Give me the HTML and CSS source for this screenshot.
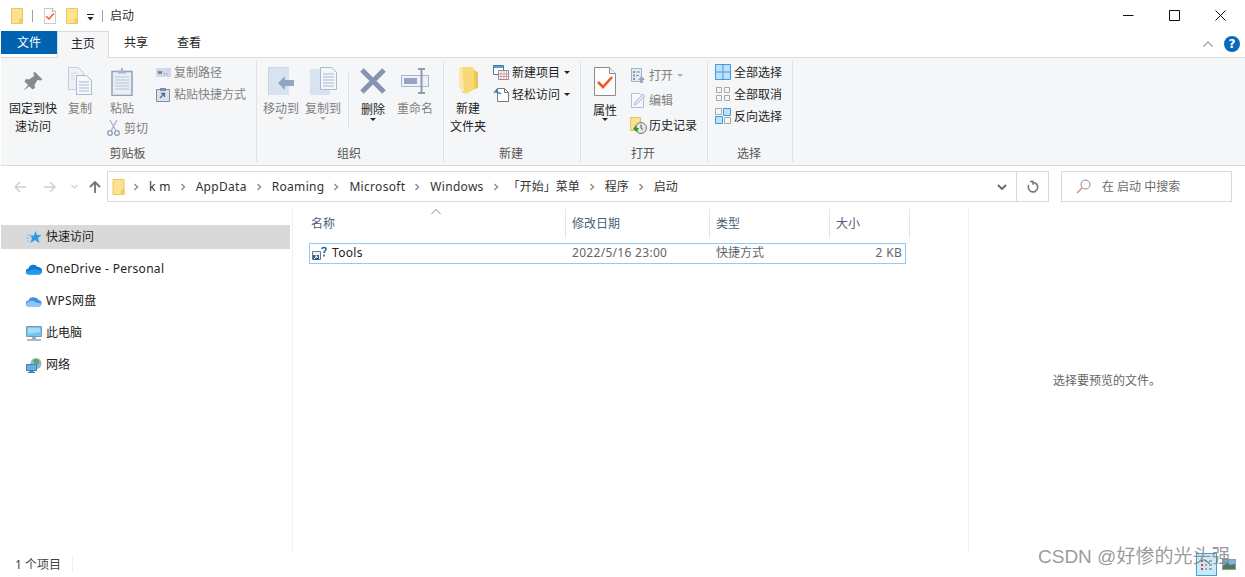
FILE: index.html
```html
<!DOCTYPE html>
<html>
<head>
    <title>启动</title>
    <link rel="stylesheet" href="styles.css">
</head>
<body>
    <svg class="sprite">
        <symbol id="folder" viewBox="0 0 12 16">
            <path d="M.5.5h11v15H.5z" fill="#fde28e" stroke="#ecc660"/>
            <path d="M9 15.5V11h2.5v4.5z" fill="#f6cf68" stroke="#ecc660"/>
        </symbol>
        <symbol id="chev" viewBox="0 0 6 8">
            <path d="M1.5 1l3 3-3 3" fill="none" stroke="#8a8a8a" stroke-width="1.4"/>
        </symbol>
        <symbol id="checkdoc" viewBox="0 0 22 29">
            <path d="M.5.5h15l6 6v22H.5z" fill="#fdfdfd" stroke="#8c8c8c"/>
            <path d="M15.5.5v6h6" fill="#eee" stroke="#8c8c8c"/>
            <path d="M4 15l5 5 9-10" fill="none" stroke="#ec5a24" stroke-width="2.6"/>
        </symbol>
    </svg>

    <div class="window">
        <header class="titlebar">
            <svg class="qa-folder"><use href="#folder"/></svg>
            <span class="qa-sep"></span>
            <svg class="qa-doc" viewBox="0 0 22 29"><use href="#checkdoc"/></svg>
            <svg class="qa-folder2"><use href="#folder"/></svg>
            <svg class="qa-drop" viewBox="0 0 7 7"><path d="M0 .5h7" stroke="#222"/><path d="M.5 3h6l-3 3.5z" fill="#222"/></svg>
            <span class="qa-sep qa-sep2"></span>
            <span class="title-text">启动</span>
            <div class="winbtns">
                <svg width="11" height="11" viewBox="0 0 11 11"><path d="M0 5.500h10.500" stroke="#111"/></svg>
                <svg width="11" height="11" viewBox="0 0 11 11"><path d="M.5.5h10v10H.5z" fill="none" stroke="#111"/></svg>
                <svg width="11" height="11" viewBox="0 0 11 11"><path d="M.5.5l10 10M10.500.5l-10 10" stroke="#111"/></svg>
            </div>
        </header>

        <nav class="tabs">
            <div class="tab tab-file">文件</div>
            <div class="tab tab-home">主页</div>
            <div class="tab tab-share">共享</div>
            <div class="tab tab-view">查看</div>
            <svg class="ribbon-up" viewBox="0 0 10 6"><path d="M.5 5.500L5 1l4.500 4.500" fill="none" stroke="#9a9a9a" stroke-width="1.200"/></svg>
            <div class="help">?</div>
        </nav>

        <section class="ribbon">
            <div class="group group-clip">
                <div class="group-body">
                    <div class="big w48">
                        <div class="big-ico">
                            <svg width="22" height="22" viewBox="0 0 22 22"><path d="M12.500 1.500l8 8-2 1-3-.5-3 5 .5 3-2.500 1.500-8-8L4 9l3 .5 5-3.500-.5-3z" fill="#858a90"/><path d="M7 14l-6 7 7.500-5.500z" fill="#858a90"/></svg>
                        </div>
                        <span>固定到快<br>速访问</span>
                    </div>
                    <div class="big w36 off">
                        <div class="big-ico">
                            <svg width="24" height="28" viewBox="0 0 24 28"><path d="M.5.5h10l5 5v17H.5z" fill="#eef2f8" stroke="#c0cde0"/><path d="M8.500 8.500h10l5 5v14h-15z" fill="#f6f8fb" stroke="#a9b9d2"/><path d="M11 15h10M11 18h10M11 21h10M11 24h10" stroke="#a9b9d2"/><path d="M3 6h6M3 9h4M3 12h4" stroke="#cfd9e8"/></svg>
                        </div>
                        <span>复制</span>
                    </div>
                    <div class="paste-col">
                        <div class="big w32 off">
                            <div class="big-ico">
                                <svg width="22" height="29" viewBox="0 0 22 29"><path d="M1 4.500h20v24H1z" fill="#e9eef5" stroke="#8fa1bb" stroke-width="1.500"/><path d="M7 3.500h3V1h2v2.500h3v3H7z" fill="#aab8cc"/><path d="M4 10h14M4 13h14M4 16h14M4 19h14M4 22h14" stroke="#b9c6d8"/></svg>
                            </div>
                            <span>粘贴</span>
                        </div>
                        <div class="small h22 off cut">
                            <svg width="13" height="16" viewBox="0 0 13 16"><circle cx="3" cy="13" r="2.300" fill="none" stroke="#8b9cb6" stroke-width="1.300"/><circle cx="10" cy="13" r="2.300" fill="none" stroke="#8b9cb6" stroke-width="1.300"/><path d="M4 11L10 0M9 11L3 0" stroke="#a3b0c4" stroke-width="1.200"/></svg>
                            <span>剪切</span>
                        </div>
                    </div>
                    <div class="small-col">
                        <div class="small h22 off">
                            <span class="small-ico"><svg width="15" height="9" viewBox="0 0 15 9"><path d="M0 0h15v9H0z" fill="#cfd9e8"/><path d="M2 3l1 3 1-3 1 3 1-3M8 6h1M10.500 6h1" fill="none" stroke="#667" stroke-width=".8"/></svg></span>
                            <span>复制路径</span>
                        </div>
                        <div class="small h22 off">
                            <span class="small-ico"><svg width="14" height="15" viewBox="0 0 14 15"><path d="M.5 2.500h13v12H.5z" fill="#dbe2ec" stroke="#7d8ea6"/><path d="M4 1h6v3H4z" fill="#7d8ea6"/><path d="M4 11l4-4M5 6.500h3.500V10" fill="none" stroke="#4a6a96" stroke-width="1.300"/></svg></span>
                            <span>粘贴快捷方式</span>
                        </div>
                    </div>
                </div>
                <div class="group-label">剪贴板</div>
            </div>

            <div class="group group-org">
                <div class="group-body">
                    <div class="big w36 off">
                        <div class="big-ico">
                            <svg width="26" height="28" viewBox="0 0 26 28"><path d="M0 0h21v28H0z" fill="#d8e2f1"/><path d="M0 .5h21M.5 0v28" stroke="#c9d6e8"/><path d="M10 16l7-7v4h9v6h-9v4z" fill="#92a5c2"/></svg>
                        </div>
                        <span>移动到</span>
                        <i class="caret light"></i>
                    </div>
                    <div class="big w36 off">
                        <div class="big-ico">
                            <svg width="27" height="28" viewBox="0 0 27 28"><path d="M0 2h20v26H0z" fill="#d8e2f1"/><path d="M10.500.5h11l5 5v17h-16z" fill="#f4f6fa" stroke="#a9b9d2"/><path d="M13 7h11M13 10h11M13 13h11M13 16h11M13 19h11" stroke="#a9b9d2"/></svg>
                        </div>
                        <span>复制到</span>
                        <i class="caret light"></i>
                    </div>
                    <span class="inner-sep"></span>
                    <div class="big w36 big-del">
                        <div class="big-ico">
                            <svg width="26" height="26" viewBox="0 0 26 26"><path d="M2 2l22 22M24 2L2 24" stroke="#8494b2" stroke-width="5"/></svg>
                        </div>
                        <span>删除</span>
                        <i class="caret"></i>
                    </div>
                    <div class="big w36 off">
                        <div class="big-ico">
                            <svg width="28" height="26" viewBox="0 0 28 26"><path d="M.5 7.500h27v11H.5z" fill="#eef2f8" stroke="#a6b5cc"/><path d="M3 10h13v6H3z" fill="#93a5c2"/><path d="M17 1h3.500M24 1h-3.500v24M17 25h7" fill="none" stroke="#8c9cb6" stroke-width="2"/></svg>
                        </div>
                        <span>重命名</span>
                    </div>
                </div>
                <div class="group-label">组织</div>
            </div>

            <div class="group group-new">
                <div class="group-body">
                    <div class="big w36">
                        <div class="big-ico">
                            <svg width="19" height="28" viewBox="0 0 19 28"><path d="M3 26L16 22l3-1V5l-3-1V1z" fill="#f0c458"/><path d="M0 0h14l2 22-9 5-4-3z" fill="#f7d978"/><path d="M0 0h3l2 24H3L0 20z" fill="#fbe9ac"/></svg>
                        </div>
                        <span>新建<br>文件夹</span>
                    </div>
                    <div class="small-col">
                        <div class="small h22">
                            <span class="small-ico"><svg width="16" height="15" viewBox="0 0 16 15"><path d="M.5.500h10v9H.5z" fill="#fff" stroke="#4c7a99"/><path d="M1 1h9v2H1z" fill="#58a0c8"/><path d="M5.500 5.500h10v9h-10z" fill="#fff" stroke="#8a8fa8"/><path d="M8 5.500v9M11 5.500v9M13.500 5.500v9M5.500 9h10M5.500 11.500h10" stroke="#c66" stroke-width=".6"/></svg></span>
                            <span>新建项目</span><i class="caret side"></i>
                        </div>
                        <div class="small h22">
                            <span class="small-ico"><svg width="15" height="15" viewBox="0 0 15 15"><path d="M3.500 1.500h7l4 4v9h-11z" fill="#fff" stroke="#777"/><path d="M10.500 1.500v4h4" fill="none" stroke="#777"/><path d="M0 6l2.500-3 .5 2.500c2 0 3 .5 4 1.500" fill="none" stroke="#2d7fc1" stroke-width="1.300"/></svg></span>
                            <span>轻松访问</span><i class="caret side"></i>
                        </div>
                    </div>
                </div>
                <div class="group-label">新建</div>
            </div>

            <div class="group group-open">
                <div class="group-body">
                    <div class="big w24 big-prop">
                        <div class="big-ico">
                            <svg width="22" height="29"><use href="#checkdoc"/></svg>
                        </div>
                        <span>属性</span>
                        <i class="caret"></i>
                    </div>
                    <div class="small-col rows25">
                        <div class="small h25 off">
                            <span class="small-ico"><svg width="14" height="15" viewBox="0 0 14 15"><path d="M.5.500h10v13H.5z" fill="#e3e9f2" stroke="#a3b1c6"/><path d="M2 3h2v2H2zM2 6.500h2v2H2zM2 10h2v2H2z" fill="#8295b2"/><path d="M5 4h4M5 7.500h3" stroke="#8295b2"/><path d="M10.500 8l3.500 4h-2v3H9v-3H7z" fill="#95a7c2"/></svg></span>
                            <span>打开</span><i class="caret side light"></i>
                        </div>
                        <div class="small h25 off">
                            <span class="small-ico"><svg width="14" height="15" viewBox="0 0 14 15"><path d="M.5.500h8l4 4v10H.5z" fill="#f6f8fb" stroke="#b3c0d4"/><path d="M3 12l1-3 8-8 2 2-8 8z" fill="#dce5f1" stroke="#a9b8cf" stroke-width=".8"/></svg></span>
                            <span>编辑</span>
                        </div>
                        <div class="small h25 history">
                            <span class="small-ico"><svg width="17" height="17" viewBox="0 0 17 17"><path d="M.5.500h10v13H.5z" fill="#fde28e" stroke="#e8c35c"/><circle cx="11" cy="11" r="5.500" fill="#e7e7e7" stroke="#777"/><path d="M11 7.500V11l2 1.500" fill="none" stroke="#555"/><path d="M3 12l3-4 1 3h2l-2 4z" fill="#2f9e3a"/></svg></span>
                            <span>历史记录</span>
                        </div>
                    </div>
                </div>
                <div class="group-label">打开</div>
            </div>

            <div class="group group-sel">
                <div class="group-body">
                    <div class="small-col">
                        <div class="small h22">
                            <span class="small-ico"><svg width="16" height="16" viewBox="0 0 16 16"><path d="M.5.500h15v15H.5zM8 .5v15M.5 8h15" fill="#bfe0f8" stroke="#3a9ae2"/></svg></span>
                            <span>全部选择</span>
                        </div>
                        <div class="small h22">
                            <span class="small-ico"><svg width="14" height="14" viewBox="0 0 14 14"><path d="M.5.500h5v5h-5zM8.500.500h5v5h-5zM.5 8.500h5v5h-5zM8.500 8.500h5v5h-5z" fill="none" stroke="#a8a8a8"/></svg></span>
                            <span>全部取消</span>
                        </div>
                        <div class="small h22">
                            <span class="small-ico"><svg width="16" height="16" viewBox="0 0 16 16"><path d="M.5.500h6v6h-6zM9.500 9.500h6v6h-6z" fill="none" stroke="#a8a8a8"/><path d="M8.500.500h7v7h-7zM.5 8.500h7v7h-7z" fill="#bfe0f8" stroke="#3a9ae2"/></svg></span>
                            <span>反向选择</span>
                        </div>
                    </div>
                </div>
                <div class="group-label">选择</div>
            </div>
        </section>

        <div class="addressbar">
            <div class="nav-btns">
                <svg width="12" height="12" viewBox="0 0 12 12"><path d="M6 1L1 6l5 5M1 6h11" fill="none" stroke="#d0d0d0" stroke-width="1.500"/></svg>
                <svg width="12" height="12" viewBox="0 0 12 12"><path d="M6 1l5 5-5 5M11 6H0" fill="none" stroke="#d0d0d0" stroke-width="1.500"/></svg>
                <svg width="7" height="5" viewBox="0 0 7 5"><path d="M.5 1l3 3 3-3" fill="none" stroke="#d0d0d0" stroke-width="1.200"/></svg>
                <svg width="12" height="12" viewBox="0 0 12 12"><path d="M1 6l5-5 5 5M6 1v11" fill="none" stroke="#727272" stroke-width="1.800"/></svg>
            </div>
            <div class="address">
                <div class="crumbs">
                    <svg class="crumb-folder"><use href="#folder"/></svg>
                    <svg class="chev first"><use href="#chev"/></svg><span class="lat">k m</span>
                    <svg class="chev"><use href="#chev"/></svg><span class="lat">AppData</span>
                    <svg class="chev"><use href="#chev"/></svg><span class="lat">Roaming</span>
                    <svg class="chev"><use href="#chev"/></svg><span class="lat">Microsoft</span>
                    <svg class="chev"><use href="#chev"/></svg><span class="lat">Windows</span>
                    <svg class="chev"><use href="#chev"/></svg><span class="start-menu">「开始」菜单</span>
                    <svg class="chev"><use href="#chev"/></svg><span>程序</span>
                    <svg class="chev"><use href="#chev"/></svg><span>启动</span>
                </div>
                <svg class="addr-drop" viewBox="0 0 10 6"><path d="M1 1l4 4 4-4" fill="none" stroke="#666" stroke-width="1.800"/></svg>
                <div class="refresh">
                    <svg width="12" height="13" viewBox="0 0 12 13"><path d="M3 1.500h3v3.200M6 2.500a4.700 4.700 0 1 1-4.200 2.600" fill="none" stroke="#777" stroke-width="1.600"/></svg>
                </div>
            </div>
            <div class="search">
                <svg width="15" height="15" viewBox="0 0 15 15"><circle cx="9.500" cy="5.500" r="4.500" fill="none" stroke="#8a8a8a"/><path d="M6 9l-5 5" stroke="#c98a62" stroke-width="1.200"/></svg>
                <span>在 启动 中搜索</span>
            </div>
        </div>

        <div class="main">
            <aside class="nav">
                <div class="nav-row active">
                    <svg width="16" height="15" viewBox="0 0 16 15"><path d="M9.500 1l1.500 4h4.500l-3.500 3 1.500 5-4.500-3-4.500 3 1.500-5-2-2.500h4z" fill="#2f9be8"/><path d="M1 5h3.500M0 8h3.500M1 11h2.500" stroke="#8cc4f0"/></svg>
                    <span>快速访问</span>
                </div>
                <div class="nav-row">
                    <svg width="16" height="12" viewBox="0 0 16 12"><path d="M3 11.500a3 3 0 0 1-.5-6A5 5 0 0 1 11.500 4 3.800 3.800 0 0 1 16 7.500c0 2.400-1.500 4-3.500 4z" fill="#0f78d4"/><path d="M0 8.500c0 2 1.500 3 3 3h9.500c2 0 3.500-1.500 3.500-3.500L8 6z" fill="#1f9be8"/></svg>
                    <span class="lat">OneDrive - Personal</span>
                </div>
                <div class="nav-row">
                    <svg width="16" height="12" viewBox="0 0 16 12"><path d="M3 11.500a3 3 0 0 1-.5-6A4 4 0 0 1 8 2.500 4 4 0 0 1 12.500 5a3.300 3.300 0 0 1 .5 6.500z" fill="#3f8fe8"/><path d="M0 9c2-3 5-4 7.500-3S12 9 16 8c-.5 2-1.500 3.500-3 3.500H3C1.500 11.500.5 10.500 0 9z" fill="#8cc8f7"/></svg>
                    <span class="lat">WPS网盘</span>
                </div>
                <div class="nav-row">
                    <svg width="16" height="15" viewBox="0 0 16 15"><path d="M.5.500h15v10H.5z" fill="#74c4f2" stroke="#7b9ab3"/><path d="M2 2h12v4L2 8z" fill="#a5dcf8"/><path d="M6 11h4v2H6z" fill="#9db0c0"/><path d="M1 14h14" stroke="#8ea3b5" stroke-width="1.500"/></svg>
                    <span>此电脑</span>
                </div>
                <div class="nav-row">
                    <svg width="16" height="15" viewBox="0 0 16 15"><circle cx="10" cy="5.500" r="5.500" fill="#8fb7cf"/><path d="M7 2c2-2 5-1 6 1s0 3-2 3-3 0-4-4z" fill="#5aa860"/><path d="M.5 6.500h10v6H.5z" fill="#5db4ea" stroke="#4a7f9f"/><path d="M3.500 13h4v1h-4zM2 14h7v1H2z" fill="#4a7f9f"/></svg>
                    <span>网络</span>
                </div>
            </aside>

            <section class="files">
                <div class="file-head">
                    <div class="col-h">名称</div>
                    <div class="col-h">修改日期</div>
                    <div class="col-h">类型</div>
                    <div class="col-h">大小</div>
                    <svg class="sort-up" viewBox="0 0 10 5"><path d="M.5 5L5 .5 9.500 5" fill="none" stroke="#7a8a9a"/></svg>
                </div>
                <div class="file-row">
                    <div class="file-name">
                        <svg width="16" height="15" viewBox="0 0 16 15"><path d="M.5 5.500h8v8h-8z" fill="#f2f2f2" stroke="#777"/><path d="M1 9h6v5H1z" fill="#2b5c9e"/><path d="M2 13l3-3M3 10h2v2" fill="none" stroke="#fff"/><path d="M10 3c0-2 4-2 4 0 0 2-2 2-2 4M12 8.500v2" fill="none" stroke="#2a6db5" stroke-width="1.700"/></svg>
                        <span class="name-text lat">Tools</span>
                    </div>
                    <div class="file-cell lat">2022/5/16 23:00</div>
                    <div class="file-cell">快捷方式</div>
                    <div class="file-cell file-size lat">2 KB</div>
                </div>
            </section>

            <aside class="preview">选择要预览的文件。</aside>
        </div>

        <footer class="status">
            <span class="status-count">1 个项目</span>
            <span class="status-sep"></span>
            <div class="view-btns">
                <div class="view-detail">
                    <svg width="13" height="11" viewBox="0 0 13 11"><path d="M1 1h2v2H1z" fill="#777"/><path d="M1 5h2v2H1z" fill="#c44"/><path d="M1 9h2v2H1z" fill="#c44"/><path d="M5 2h2M9 2h3M5 6h2M9 6h3M5 10h2M9 10h3" stroke="#667"/></svg>
                </div>
                <div class="view-thumb">
                    <svg width="12" height="9" viewBox="0 0 12 9"><path d="M0 0h12v9H0z" fill="#7cb3e0"/><path d="M0 6l4-3 3 2 5-1v5H0z" fill="#4a7a5a"/></svg>
                </div>
            </div>
        </footer>

        <div class="watermark">CSDN @好惨的光头强</div>
    </div>
</body>
</html>
```

FILE: styles.css
```css
* {
    box-sizing: border-box;
}

html, body {
    margin: 0;
    padding: 0;
    background: #fff;
}

body {
    font-family: "Noto Sans", "Noto Sans CJK SC", sans-serif;
    font-size: 12px;
    line-height: 18px;
    color: #1e1e1e;
    overflow: hidden;
}

.sprite {
    display: none;
}

svg {
    display: block;
    flex: none;
}

/* latin runs sit a bit wider than the font gives */
.lat {
    letter-spacing: 0.3px;
}

.window {
    position: relative;
    width: 1245px;
    height: 577px;
    display: flex;
    flex-direction: column;
    overflow: hidden;
}

/* title bar */
.titlebar {
    height: 31px;
    display: flex;
    align-items: center;
    padding-left: 11px;
}

.qa-folder, .qa-folder2 {
    width: 12px;
    height: 16px;
}

.qa-folder2 {
    margin-left: 10px;
}

.qa-sep {
    width: 1px;
    height: 12px;
    background: #a0a0a0;
    margin-left: 9px;
}

.qa-sep2 {
    margin-left: 8px;
}

.qa-doc {
    width: 12px;
    height: 16px;
    margin-left: 11px;
}

.qa-drop {
    width: 7px;
    height: 7px;
    margin: 3px 0 0 9px;
}

.title-text {
    margin-left: 7px;
    color: #333;
}

.winbtns {
    margin-left: auto;
    display: flex;
    gap: 35px;
    padding-right: 19px;
}

/* tabs */
.tabs {
    height: 26px;
    display: flex;
    align-items: flex-start;
    padding-left: 1px;
    position: relative;
    z-index: 1;
}

.tab {
    text-align: center;
    height: 23px;
    line-height: 24px;
    color: #222;
}

.tab-file {
    width: 56px;
    background: #0063b1;
    color: #fff;
}

.tab-home {
    width: 52px;
    height: 27px;
    background: #f5f6f7;
    border: 1px solid #dadbdc;
    border-bottom: 0;
    line-height: 23px;
}

.tab-share {
    width: 54px;
}

.tab-view {
    width: 52px;
}

.ribbon-up {
    width: 10px;
    height: 6px;
    margin: 10px 0 0 auto;
}

.help {
    width: 16px;
    height: 16px;
    border-radius: 50%;
    background: #0a68bd;
    color: #fff;
    font-family: "DejaVu Sans", sans-serif;
    font-size: 12px;
    font-weight: bold;
    line-height: 16px;
    text-align: center;
    margin: 5px 5px 0 11px;
}

/* ribbon */
.ribbon {
    height: 109px;
    margin-left: 1px;
    background: #f5f6f7;
    border-top: 1px solid #dadbdc;
    border-bottom: 1px solid #dadbdc;
    padding-top: 3px;
    display: flex;
    align-items: flex-start;
}

.group {
    height: 101px;
    display: flex;
    flex-direction: column;
    border-right: 1px solid #dfe1e3;
}

.group-clip { width: 256px; }
.group-org { width: 187px; }
.group-new { width: 137px; }
.group-open { width: 127px; }
.group-sel { width: 85px; }

.group-body {
    flex: 1;
    display: flex;
    align-items: flex-start;
}

.group-clip .group-body { padding-left: 8px; gap: 5px; }
.group-org .group-body { padding-left: 6px; gap: 6px; }
.group-new .group-body { padding-left: 6px; gap: 7px; }
.group-open .group-body { padding-left: 12px; gap: 13px; }
.group-sel .group-body { padding-left: 7px; }

.group-label {
    height: 18px;
    line-height: 20px;
    padding-right: 2px;
    text-align: center;
    color: #555;
}

.big {
    padding-top: 5px;
    display: flex;
    flex-direction: column;
    align-items: center;
    text-align: center;
    white-space: nowrap;
}

.big-ico {
    height: 30px;
    margin-bottom: 4px;
    display: flex;
    align-items: center;
    justify-content: center;
}

.big-del .big-ico {
    margin-bottom: 5px;
}

.big-prop .big-ico {
    margin-bottom: 6px;
}

.w48 { width: 48px; }
.w36 { width: 36px; }
.w32 { width: 32px; }
.w24 { width: 24px; }

.off {
    color: #7f7f7f;
}

.paste-col {
    width: 44px;
    margin-left: 3px;
}

.cut {
    margin: -1px 0 0 1px;
    gap: 4px;
    white-space: nowrap;
}

.small-col {
    display: flex;
    flex-direction: column;
}

.small {
    display: flex;
    align-items: center;
    white-space: nowrap;
}

.h22 { height: 22px; }
.h25 { height: 25px; }

.h22 > span:not(.small-ico) {
    padding-top: 2px;
}

.rows25 {
    padding-top: 2px;
}

.small-ico {
    width: 16px;
    margin-right: 3px;
    display: flex;
    justify-content: center;
}

.history {
    color: #222;
}

.caret {
    width: 0;
    height: 0;
    border-left: 3px solid transparent;
    border-right: 3px solid transparent;
    border-top: 3px solid #222;
}

.big .caret {
    margin-top: -1px;
}

.big-prop .caret {
    margin-top: -2px;
}

.caret.light {
    border-top-color: #b0b0b0;
}

.caret.side {
    margin: 0 0 0 4px;
}

.inner-sep {
    width: 1px;
    height: 55px;
    background: #dfe1e3;
    margin: 12px 0 0 1px;
}

/* address bar */
.addressbar {
    height: 42px;
    padding-top: 5px;
    display: flex;
    align-items: flex-start;
    color: #333;
}

.nav-btns {
    width: 107px;
    height: 31px;
    padding-left: 14px;
    display: flex;
    align-items: center;
}

.nav-btns svg:nth-child(2) {
    margin-left: 18px;
}

.nav-btns svg:nth-child(3) {
    margin-left: 15px;
}

.nav-btns svg:nth-child(4) {
    margin-left: 11px;
}

.address {
    width: 942px;
    height: 31px;
    border: 1px solid #d9d9d9;
    display: flex;
    align-items: center;
    padding-left: 4px;
}

.crumbs {
    flex: 1;
    display: flex;
    align-items: center;
    white-space: nowrap;
}

.crumb-folder {
    width: 13px;
    height: 16px;
}

.chev {
    width: 6px;
    height: 8px;
    margin: 0 10px 0 9px;
}

.chev.first {
    margin-left: 8px;
}

.start-menu {
    margin-left: -1px;
}

.addr-drop {
    width: 10px;
    height: 6px;
    margin-right: 9px;
}

.refresh {
    width: 32px;
    height: 29px;
    border-left: 1px solid #d9d9d9;
    display: flex;
    align-items: center;
    justify-content: center;
}

.search {
    width: 171px;
    height: 31px;
    margin-left: 12px;
    border: 1px solid #d9d9d9;
    display: flex;
    align-items: center;
    padding-left: 14px;
    gap: 11px;
    color: #6d6d6d;
}

/* main area */
.main {
    height: 344px;
    display: flex;
}

.nav {
    width: 293px;
    border-right: 1px solid #f0f0f0;
    padding-top: 17px;
    display: flex;
    flex-direction: column;
    gap: 8px;
}

.nav-row {
    height: 24px;
    width: 289px;
    margin-left: 1px;
    padding-left: 25px;
    display: flex;
    align-items: center;
    color: #222;
}

.nav-row svg {
    width: 16px;
    margin-right: 4px;
}

.nav-row.active {
    background: #d9d9d9;
}

.files {
    width: 675px;
    padding: 1px 0 0 16px;
}

.file-head {
    position: relative;
    height: 27px;
    display: grid;
    grid-template-columns: 257px 144px 120px 80px;
    width: 601px;
}

.col-h {
    border-right: 1px solid #e5e5e5;
    padding-left: 6px;
    line-height: 29px;
    color: #4c607a;
}

.col-h:first-child {
    padding-left: 2px;
}

.sort-up {
    position: absolute;
    left: 122px;
    top: 0;
    width: 10px;
    height: 5px;
}

.file-row {
    width: 597px;
    height: 21px;
    margin-top: 7px;
    padding-bottom: 2px;
    border: 1px solid #91c9f7;
    display: grid;
    grid-template-columns: 256px 144px 120px 75px;
    align-items: center;
}

.file-name {
    display: flex;
    align-items: center;
    padding-left: 2px;
}

.name-text {
    margin-left: 4px;
    color: #222;
}

.file-cell {
    padding-left: 6px;
    color: #666;
}

.file-size {
    text-align: right;
    padding: 0 3px 0 0;
}

.preview {
    flex: 1;
    border-left: 1px solid #f2f2f2;
    display: flex;
    align-items: center;
    justify-content: center;
    padding-top: 2px;
    color: #666;
}

/* status bar */
.status {
    flex: 1;
    display: flex;
    align-items: center;
    padding-left: 15px;
    color: #444;
}

.status-sep {
    width: 1px;
    height: 15px;
    background: #eee;
    margin-left: 11px;
}

.view-btns {
    margin-left: auto;
    margin-right: 9px;
    display: flex;
    align-items: center;
    gap: 5px;
}

.view-detail {
    width: 21px;
    height: 23px;
    background: #cde8f7;
    border: 1px solid #3fa0d8;
    display: flex;
    align-items: center;
    justify-content: center;
}

.view-thumb {
    width: 14px;
    height: 11px;
    border: 1px solid #999;
    display: flex;
    align-items: center;
    justify-content: center;
    overflow: hidden;
}

.watermark {
    position: absolute;
    left: 1038px;
    top: 545px;
    font-family: "Liberation Sans", "Noto Sans CJK SC", sans-serif;
    font-size: 19px;
    line-height: 24px;
    color: rgba(128, 128, 128, 0.8);
    white-space: nowrap;
}
```
